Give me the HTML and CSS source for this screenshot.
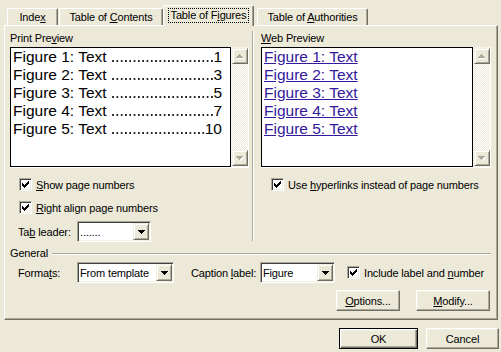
FILE: index.html
```html
<!DOCTYPE html>
<html lang="en">
<head>
    <meta charset="UTF-8">
    <title>Index and Tables</title>
    <link rel="stylesheet" href="styles.css">
</head>
<body>
<div class="dialog">
    <div class="tabs">
        <div class="tab tab-index">Inde<u>x</u></div>
        <div class="tab tab-contents">Table of <u>C</u>ontents</div>
        <div class="tab tab-figures"><span class="focus">Table of F<u>i</u>gures</span></div>
        <div class="tab tab-authorities">Table of <u>A</u>uthorities</div>
    </div>

    <div class="panel">
        <div class="columns">
            <!-- Print preview side -->
            <div class="column column-print">
                <div class="caption">Print Pre<u>v</u>iew</div>
                <div class="preview">
                    <div class="preview-text">
                        <div class="entry"><span>Figure 1: Text</span><span class="leader"></span><span>1</span></div>
                        <div class="entry"><span>Figure 2: Text</span><span class="leader"></span><span>3</span></div>
                        <div class="entry"><span>Figure 3: Text</span><span class="leader"></span><span>5</span></div>
                        <div class="entry"><span>Figure 4: Text</span><span class="leader"></span><span>7</span></div>
                        <div class="entry"><span>Figure 5: Text</span><span class="leader"></span><span>10</span></div>
                    </div>
                    <div class="scrollbar">
                        <div class="scroll-btn"><svg width="8" height="5" viewBox="0 0 8 5"><path fill="#fff" d="M4 1h1v1H4zM3 2h3v1H3zM2 3h5v1H2zM1 4h7v1H1z"/><path fill="#ACA899" d="M3 0h1v1H3zM2 1h3v1H2zM1 2h5v1H1zM0 3h7v1H0z"/></svg></div>
                        <div class="scroll-btn"><svg width="8" height="5" viewBox="0 0 8 5"><path fill="#fff" d="M1 1h7v1H1zM2 2h5v1H2zM3 3h3v1H3zM4 4h1v1H4z"/><path fill="#ACA899" d="M0 0h7v1H0zM1 1h5v1H1zM2 2h3v1H2zM3 3h1v1H3z"/></svg></div>
                    </div>
                </div>
                <div class="check">
                    <span class="box"><svg width="7" height="7" viewBox="0 0 7 7"><path d="M0 2h1v3H0zM1 3h1v3H1zM2 4h1v3H2zM3 3h1v3H3zM4 2h1v3H4zM5 1h1v3H5zM6 0h1v3H6z"/></svg></span>
                    <span><u>S</u>how page numbers</span>
                </div>
                <div class="check">
                    <span class="box"><svg width="7" height="7" viewBox="0 0 7 7"><path d="M0 2h1v3H0zM1 3h1v3H1zM2 4h1v3H2zM3 3h1v3H3zM4 2h1v3H4zM5 1h1v3H5zM6 0h1v3H6z"/></svg></span>
                    <span><u>R</u>ight align page numbers</span>
                </div>
                <div class="field">
                    <span class="field-label">Ta<u>b</u> leader:</span>
                    <div class="combo combo-leader">
                        <span class="combo-value">.......</span>
                        <span class="drop"><svg width="7" height="4" viewBox="0 0 7 4"><path d="M0 0h7v1H0zM1 1h5v1H1zM2 2h3v1H2zM3 3h1v1H3z"/></svg></span>
                    </div>
                </div>
            </div>

            <div class="divider"></div>

            <!-- Web preview side -->
            <div class="column column-web">
                <div class="caption"><u>W</u>eb Preview</div>
                <div class="preview">
                    <div class="preview-text">
                        <div class="entry"><a class="link">Figure 1: Text</a></div>
                        <div class="entry"><a class="link">Figure 2: Text</a></div>
                        <div class="entry"><a class="link">Figure 3: Text</a></div>
                        <div class="entry"><a class="link">Figure 4: Text</a></div>
                        <div class="entry"><a class="link">Figure 5: Text</a></div>
                    </div>
                    <div class="scrollbar">
                        <div class="scroll-btn"><svg width="8" height="5" viewBox="0 0 8 5"><path fill="#fff" d="M4 1h1v1H4zM3 2h3v1H3zM2 3h5v1H2zM1 4h7v1H1z"/><path fill="#ACA899" d="M3 0h1v1H3zM2 1h3v1H2zM1 2h5v1H1zM0 3h7v1H0z"/></svg></div>
                        <div class="scroll-btn"><svg width="8" height="5" viewBox="0 0 8 5"><path fill="#fff" d="M1 1h7v1H1zM2 2h5v1H2zM3 3h3v1H3zM4 4h1v1H4z"/><path fill="#ACA899" d="M0 0h7v1H0zM1 1h5v1H1zM2 2h3v1H2zM3 3h1v1H3z"/></svg></div>
                    </div>
                </div>
                <div class="check">
                    <span class="box"><svg width="7" height="7" viewBox="0 0 7 7"><path d="M0 2h1v3H0zM1 3h1v3H1zM2 4h1v3H2zM3 3h1v3H3zM4 2h1v3H4zM5 1h1v3H5zM6 0h1v3H6z"/></svg></span>
                    <span>Use <u>h</u>yperlinks instead of page numbers</span>
                </div>
            </div>
        </div>

        <!-- General options -->
        <div class="legend"><span>General</span><span class="rule"></span></div>
        <div class="general-row">
            <span class="field-label">Forma<u>t</u>s:</span>
            <div class="combo combo-formats">
                <span class="combo-value">From template</span>
                <span class="drop"><svg width="7" height="4" viewBox="0 0 7 4"><path d="M0 0h7v1H0zM1 1h5v1H1zM2 2h3v1H2zM3 3h1v1H3z"/></svg></span>
            </div>
            <span class="caption-label">Caption <u>l</u>abel:</span>
            <div class="combo combo-caption">
                <span class="combo-value">Figure</span>
                <span class="drop"><svg width="7" height="4" viewBox="0 0 7 4"><path d="M0 0h7v1H0zM1 1h5v1H1zM2 2h3v1H2zM3 3h1v1H3z"/></svg></span>
            </div>
            <div class="check check-inline">
                <span class="box"><svg width="7" height="7" viewBox="0 0 7 7"><path d="M0 2h1v3H0zM1 3h1v3H1zM2 4h1v3H2zM3 3h1v3H3zM4 2h1v3H4zM5 1h1v3H5zM6 0h1v3H6z"/></svg></span>
                <span>Include label and <u>n</u>umber</span>
            </div>
        </div>
        <div class="button-row">
            <div class="btn btn-options"><span><u>O</u>ptions...</span></div>
            <div class="btn btn-modify"><span><u>M</u>odify...</span></div>
        </div>
    </div>

    <div class="footer">
        <div class="btn btn-default btn-ok">OK</div>
        <div class="btn btn-cancel">Cancel</div>
    </div>
</div>
</body>
</html>
```

FILE: styles.css
```css
body {
    margin: 0;
    background: #ECE9D8;
    font: 11px "Liberation Sans", Arial, sans-serif;
    letter-spacing: -0.15px;
    color: #000;
    width: 501px;
    height: 352px;
    overflow: hidden;
}
u { text-decoration: underline; text-underline-offset: 1px; }

.dialog { padding: 5px 0 0 4px; }

/* tabs */
.tabs {
    display: flex;
    align-items: flex-end;
    height: 20px;
    padding-left: 3px;
    position: relative;
    z-index: 1;
}
.tab {
    box-sizing: border-box;
    height: 17px;
    padding-top: 2px;
    line-height: 13px;
    text-align: center;
    border: 1px solid #fff;
    border-right-color: #716F64;
    border-bottom: 0;
    border-radius: 2px 2px 0 0;
    box-shadow: inset -1px 0 #ACA899;
    background: #ECE9D8;
}
.tab-index { width: 51px; margin-right: 1px; }
.tab-contents { width: 104px; }
.tab-figures {
    width: 91px;
    height: 21px;
    margin-bottom: -1px;
    padding-top: 2px;
}
.tab-authorities { width: 111px; margin-left: 3px; }
.focus {
    display: inline-block;
    border: 1px dotted #000;
    padding: 0 2px;
    line-height: 13px;
}

/* main panel */
.panel {
    width: 494px;
    height: 295px;
    box-sizing: border-box;
    border: 1px solid #fff;
    border-right-color: #716F64;
    border-bottom-color: #716F64;
    box-shadow: inset -1px -1px #ACA899;
    padding: 0 6px 0 5px;
}
.columns {
    display: flex;
    height: 221px;
}
.column { padding-top: 6px; }
.column-print { width: 239px; }
.column-web { width: 230px; margin-left: 7px; }
.divider {
    width: 0;
    height: 210px;
    margin: 5px 0 0 3px;
    border-left: 1px solid #ACA899;
    border-right: 1px solid #fff;
}
.caption { line-height: 13px; }

.preview {
    display: flex;
    height: 121px;
    margin-top: 2px;
    box-sizing: border-box;
    border-right: 1px solid #fff;
    border-bottom: 1px solid #fff;
}
.preview-text {
    flex: 1;
    min-width: 0;
    border: 1px solid #000;
    background: #fff;
    padding: 0 8px 0 2px;
    font: 15.5px/18px "Liberation Sans", Arial, sans-serif;
    letter-spacing: 0;
    overflow: hidden;
}
.entry {
    display: flex;
    white-space: nowrap;
}
/* dotted tab leader, drawn as a row of small squares on the baseline */
.leader {
    flex: 1;
    margin-left: 3px;
    background: linear-gradient(90deg, transparent 0 2.6px, #222 2.6px) right 1px bottom 4px / 4.3px 1.7px repeat-x;
}
.link {
    color: #33199C;
    text-decoration: underline;
}
.scrollbar {
    width: 17px;
    display: flex;
    flex-direction: column;
    justify-content: space-between;
    padding: 1px 0 1px 1px;
    box-sizing: border-box;
    background: repeating-conic-gradient(#ECE9D8 0% 25%, #fff 0% 50%) 0 0 / 2px 2px;
}
.scroll-btn {
    width: 16px;
    height: 16px;
    box-sizing: border-box;
    border: 1px solid;
    border-color: #F1EFE2 #716F64 #716F64 #F1EFE2;
    box-shadow: inset 1px 1px #fff, inset -1px -1px #ACA899;
    background: #ECE9D8;
    display: flex;
    align-items: center;
    justify-content: center;
}

/* checkboxes */
.check {
    display: flex;
    align-items: center;
    gap: 4px;
    height: 13px;
    margin-top: 10px;
    padding-left: 9px;
}
.column-web .check { padding-left: 10px; }
.box {
    width: 13px;
    height: 13px;
    box-sizing: border-box;
    border: 1px solid;
    border-color: #ACA899 #fff #fff #ACA899;
    box-shadow: inset 1px 1px #404040, inset -1px -1px #F1EFE2;
    background: #fff;
    padding: 2px;
}
.box svg { display: block; }

/* combos */
.field {
    display: flex;
    align-items: center;
    margin-top: 7px;
    padding-left: 8px;
}
.field-label { width: 59px; }
.combo {
    display: flex;
    align-items: center;
    box-sizing: border-box;
    height: 21px;
    border: 1px solid;
    border-color: #ACA899 #fff #fff #ACA899;
    box-shadow: inset 1px 1px #404040, inset -1px -1px #F1EFE2;
    background: #fff;
    padding: 1px;
}
.combo-value {
    flex: 1;
    padding-left: 1px;
    white-space: nowrap;
}
.drop {
    width: 16px;
    height: 17px;
    box-sizing: border-box;
    border: 1px solid;
    border-color: #F1EFE2 #716F64 #716F64 #F1EFE2;
    box-shadow: inset 1px 1px #fff, inset -1px -1px #ACA899;
    background: #ECE9D8;
    display: flex;
    align-items: center;
    justify-content: center;
}
.drop svg { display: block; }
.combo-leader { width: 74px; }
.combo-formats { width: 97px; }
.combo-caption { width: 75px; }

/* general group */
.legend {
    display: flex;
    line-height: 13px;
}
.rule {
    flex: 1;
    height: 0;
    margin: 6px 0 0 4px;
    border-top: 1px solid #ACA899;
    border-bottom: 1px solid #fff;
}
.general-row {
    display: flex;
    align-items: center;
    height: 21px;
    margin-top: 2px;
    padding-left: 8px;
}
.caption-label { width: 69px; margin-left: 17px; }
.check-inline { margin: 0 0 0 12px; padding-left: 0; }

.button-row {
    display: flex;
    justify-content: flex-end;
    gap: 16px;
    margin-top: 7px;
    padding-right: 1px;
}

/* buttons */
.btn {
    box-sizing: border-box;
    height: 21px;
    border: 1px solid;
    border-color: #fff #716F64 #716F64 #fff;
    box-shadow: inset -1px -1px #ACA899, inset 1px 1px #F1EFE2;
    background: #ECE9D8;
    display: flex;
    align-items: center;
    justify-content: center;
}
.btn-default {
    border-color: #000;
    box-shadow: inset 1px 1px #fff, inset -1px -1px #716F64, inset -2px -2px #ACA899, inset 2px 2px #F1EFE2;
}
.btn-options { width: 64px; }
.btn-modify { width: 74px; }
.btn-ok { width: 79px; }
.btn-cancel { width: 73px; }

.footer {
    display: flex;
    justify-content: flex-end;
    gap: 8px;
    padding: 8px 2px 0 0;
}
```
